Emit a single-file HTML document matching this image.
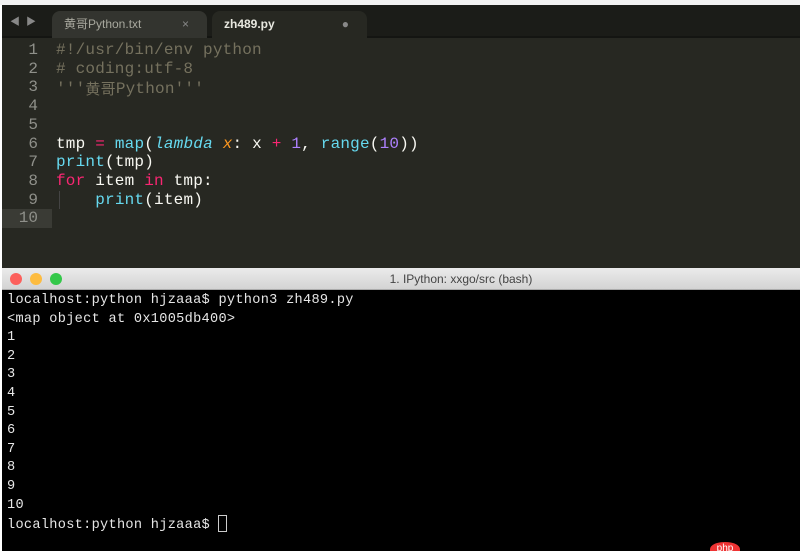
<!DOCTYPE html>
<html><head><meta charset="utf-8"><style>
*{margin:0;padding:0;box-sizing:border-box}
body{width:800px;height:551px;overflow:hidden;background:#fff;position:relative;font-family:"Liberation Mono","Noto Sans CJK SC",monospace}
#top{position:absolute;left:0;top:0;width:800px;height:5px;background:#f2f2f2}
#tabs{position:absolute;left:2px;top:5px;width:798px;height:33px;background:#1b1c18;border-bottom:2px solid #141512}
.tab{position:absolute;top:6px;height:27px;border-radius:8px 8px 0 0;font-family:"Liberation Sans","Noto Sans CJK SC",sans-serif;font-size:12px;line-height:26px}
#t1{left:50px;width:155px;background:#33342f;color:#a8a89e;padding-left:12px}
#t2{left:210px;width:155px;background:#272822;color:#e8e8e0;padding-left:12px;font-weight:bold}
#ed{position:absolute;left:2px;top:38px;width:798px;height:230px;background:#272822}
.ln{position:absolute;left:0;width:36px;text-align:right;color:#8f908a;font-size:16px;line-height:19px}
.cd{position:absolute;left:54px;color:#f8f8f2;font-size:16px;letter-spacing:0.2px;white-space:pre;line-height:19px;height:19px}
.cj{font-family:"Noto Sans CJK SC",sans-serif;font-size:15px;position:relative;top:1px}
.c{color:#75715e}.k{color:#f92672}.f{color:#66d9ef}.n{color:#ae81ff}.i{color:#66d9ef;font-style:italic}.o{color:#fd971f;font-style:italic}
#term{position:absolute;left:2px;top:268px;width:798px;height:283px;background:#000;overflow:hidden}
#tb{height:22px;background:linear-gradient(#ebebeb,#d3d3d3);border-bottom:1px solid #aaa;font-family:"Liberation Sans",sans-serif;font-size:12px;color:#444;text-align:center;line-height:22px;position:relative}
.dot{position:absolute;top:5px;width:12px;height:12px;border-radius:50%}
#tt{position:absolute;left:5px;top:24px;color:#e6e6e6;font-size:13.6px;letter-spacing:0.3px;line-height:18.6px;white-space:pre}
</style></head><body>
<div id="top"></div>
<div id="tabs">
<span style="position:absolute;left:8px;top:8px;color:#888;font-size:10px">◀ ▶</span>
<div class="tab" id="t1">黄哥Python.txt<span style="position:absolute;right:18px;color:#888">×</span></div>
<div class="tab" id="t2">zh489.py<span style="position:absolute;right:18px;color:#888">●</span></div>
</div>
<div id="ed">
<div style="position:absolute;left:0;top:171px;width:50px;height:19px;background:#3a3b35"></div>
<div style="position:absolute;left:57px;top:153px;width:1px;height:18px;background:#444"></div>
<div class="ln" style="top:3px">1</div><div class="cd c" style="top:3px">#!/usr/bin/env python</div>
<div class="ln" style="top:22px">2</div><div class="cd c" style="top:22px"># coding:utf-8</div>
<div class="ln" style="top:40px">3</div><div class="cd c" style="top:40px">'''<span class="cj">黄哥</span>Python'''</div>
<div class="ln" style="top:59px">4</div>
<div class="ln" style="top:78px">5</div>
<div class="ln" style="top:97px">6</div><div class="cd" style="top:97px">tmp <span class="k">=</span> <span class="f">map</span>(<span class="i">lambda</span> <span class="o">x</span>: x <span class="k">+</span> <span class="n">1</span>, <span class="f">range</span>(<span class="n">10</span>))</div>
<div class="ln" style="top:115px">7</div><div class="cd" style="top:115px"><span class="f">print</span>(tmp)</div>
<div class="ln" style="top:134px">8</div><div class="cd" style="top:134px"><span class="k">for</span> item <span class="k">in</span> tmp:</div>
<div class="ln" style="top:153px">9</div><div class="cd" style="top:153px">    <span class="f">print</span>(item)</div>
<div class="ln" style="top:171px">10</div>
</div>
<div id="term">
<div id="tb"><div class="dot" style="left:8px;background:#fc605c"></div><div class="dot" style="left:28px;background:#fdbc40"></div><div class="dot" style="left:48px;background:#34c84a"></div><span style="position:relative;left:60px">1. IPython: xxgo/src (bash)</span></div>
<div id="tt">localhost:python hjzaaa$ python3 zh489.py
&lt;map object at 0x1005db400&gt;
1
2
3
4
5
6
7
8
9
10
localhost:python hjzaaa$ <span style="display:inline-block;width:9px;height:17px;border:1px solid #ccc;vertical-align:-4px"></span></div>
<div style="position:absolute;left:708px;top:274px;width:30px;height:14px;border-radius:50% 50% 0 0;background:#e33;color:#fff;font-family:'Liberation Sans',sans-serif;font-size:10px;text-align:center;line-height:14px">php</div>
</div>
</body></html>
